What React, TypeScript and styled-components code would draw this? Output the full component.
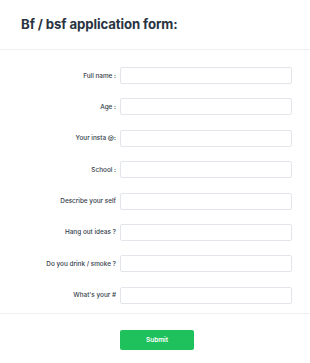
import { Fragment } from "react";
import styled, { createGlobalStyle } from "styled-components";

const GlobalStyle = createGlobalStyle`
  html, body {
    margin: 0;
    padding: 0;
    background: #ffffff;
    font-family: Inter, "Liberation Sans", Arial, sans-serif;
  }
`;

const Page = styled.div`
  width: 310px;
  min-height: 363px;
  background: #fff;
`;

const Header = styled.header`
  height: 50px;
  padding: 0 21px;
  display: flex;
  align-items: center;
  border-bottom: 1px solid #eef0f3;
  box-sizing: border-box;
`;

const Title = styled.h2`
  margin: 0 0 2px;
  font-size: 13.2px;
  font-weight: 700;
  color: #2a3342;
  letter-spacing: -0.1px;
`;

const Form = styled.form`
  display: grid;
  grid-template-columns: 116px 172px;
  column-gap: 4px;
  row-gap: 14.4px;
  align-items: center;
  padding: 17px 0 9px;
  border-bottom: 1px solid #eef0f3;
`;

const Label = styled.label`
  text-align: right;
  font-size: 6.4px;
  font-weight: 500;
  color: #333c4a;
  white-space: nowrap;
`;

const Input = styled.input`
  height: 17px;
  box-sizing: border-box;
  border: 1px solid #e2e5ea;
  border-radius: 2px;
  background: #fff;
  padding: 0 4px;
  font-size: 7px;
  outline: none;
`;

const Footer = styled.div`
  padding: 12px 0 0 120px;
`;

const SubmitButton = styled.button`
  width: 74px;
  height: 20px;
  border: none;
  border-radius: 2px;
  background: #1fc15d;
  color: #fff;
  font-family: inherit;
  font-size: 6.5px;
  font-weight: 600;
  cursor: pointer;
`;

const fields = [
  "Full name :",
  "Age :",
  "Your insta @:",
  "School :",
  "Describe your self",
  "Hang out ideas ?",
  "Do you drink / smoke ?",
  "What's your #",
];

export default function App() {
  return (
    <Page>
      <GlobalStyle />
      <Header>
        <Title>Bf / bsf application form:</Title>
      </Header>
      <Form onSubmit={(e) => e.preventDefault()}>
        {fields.map((f, i) => (
          <Fragment key={i}>
            <Label htmlFor={"f" + i}>{f}</Label>
            <Input id={"f" + i} type="text" />
          </Fragment>
        ))}
      </Form>
      <Footer>
        <SubmitButton type="button">Submit</SubmitButton>
      </Footer>
    </Page>
  );
}
